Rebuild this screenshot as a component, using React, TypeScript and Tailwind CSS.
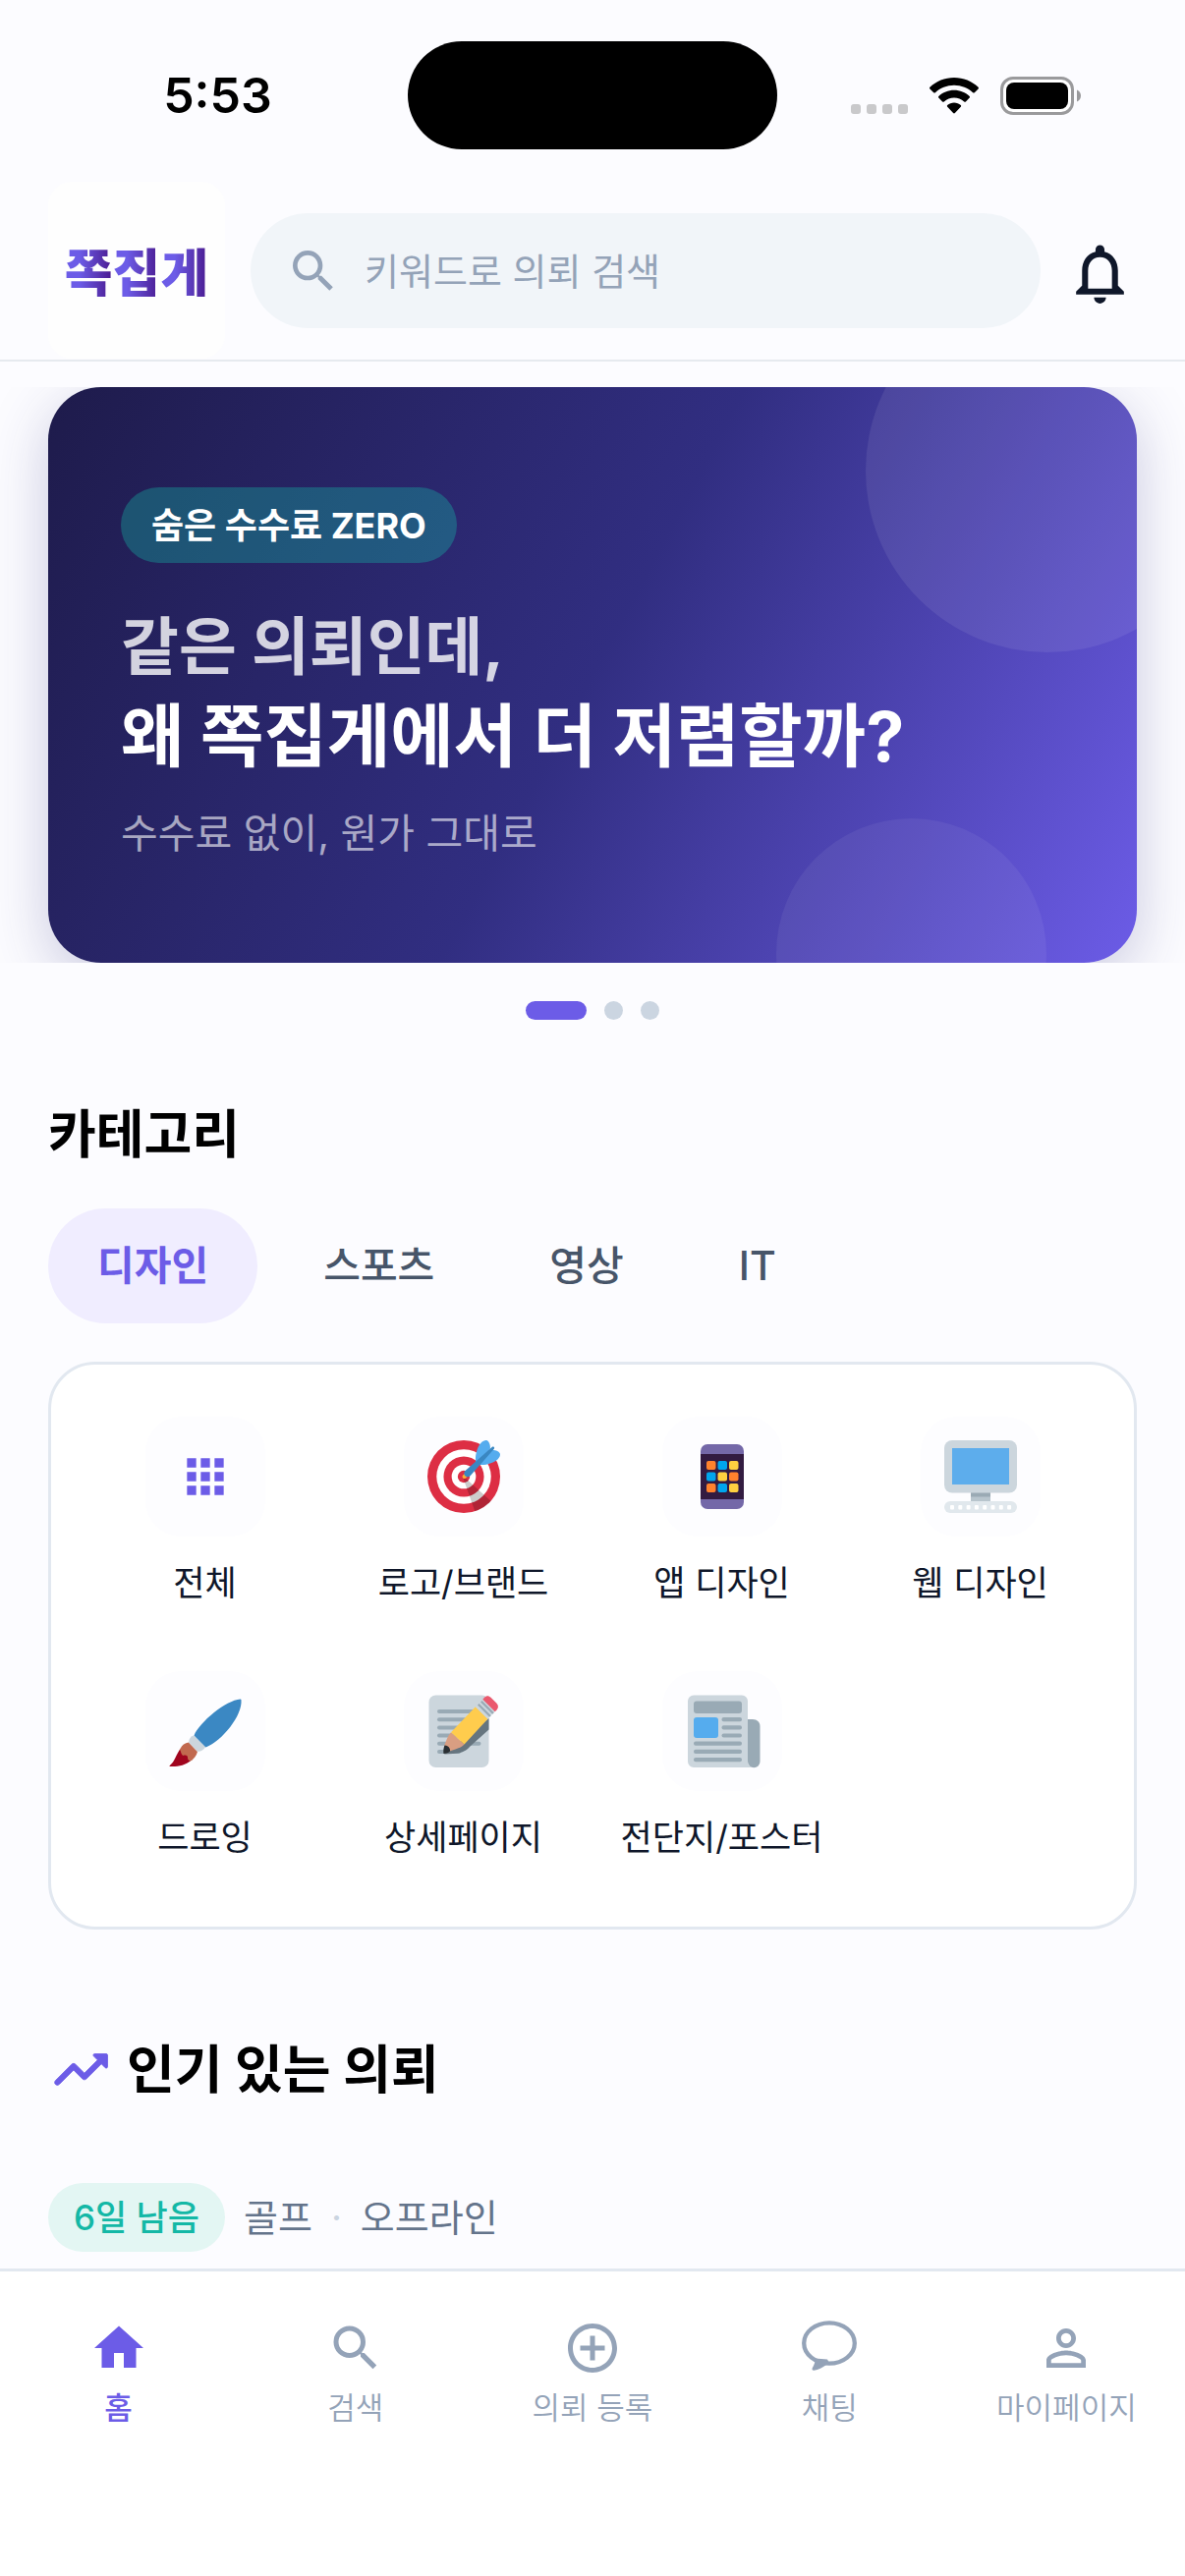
import React from "react";
import {
  MdSearch,
  MdApps,
  MdHome,
  MdAddCircleOutline,
  MdPersonOutline,
  MdOutlineNotifications,
} from "react-icons/md";

function WifiIcon() {
  return (
    <svg viewBox="0 0 50 37" className="h-[37px] w-[50px]" aria-hidden="true">
      <path d="M25 0C15.500 0 6.800 3.700 .4 9.700a1.200 1.200 0 0 0 0 1.700l3.800 3.800c.5.500 1.200.500 1.700 0C10.900 10.500 17.600 7.700 25 7.700s14.100 2.800 19.100 7.500c.5.500 1.200.500 1.700 0l3.800-3.800c.5-.5.500-1.200 0-1.700C43.200 3.700 34.500 0 25 0z" />
      <path d="M25 12.800c-6 0-11.500 2.300-15.700 6.100-.5.500-.5 1.200 0 1.700l3.800 3.800c.5.500 1.200.500 1.700 0a15 15 0 0 1 20.400 0c.5.500 1.200.500 1.700 0l3.800-3.800c.5-.5.500-1.200 0-1.700C36.500 15.100 31 12.800 25 12.800z" />
      <path d="M25 25.500c-2.600 0-4.900.9-6.800 2.500-.5.500-.5 1.200 0 1.700l5.900 6.300c.5.500 1.300.500 1.800 0l5.900-6.300c.5-.5.500-1.200 0-1.700-1.900-1.600-4.200-2.500-6.800-2.500z" />
    </svg>
  );
}

function BatteryIcon() {
  return (
    <svg viewBox="0 0 82 39" className="h-[39px] w-[82px]" aria-hidden="true">
      <rect x="1.500" y="1.500" width="72" height="36" rx="11.500" fill="#fff" stroke="#9a9a9c" strokeWidth="3" />
      <rect x="6" y="6" width="63" height="27" rx="8" />
      <path d="M78 13.500c2.400 1 4 3.300 4 6s-1.600 5-4 6z" fill="#9a9a9c" />
    </svg>
  );
}

const emoji = "h-[74px] w-[74px] overflow-visible";

function TargetIcon() {
  return (
    <svg viewBox="0 0 36 36" className={emoji} aria-hidden="true">
      <circle fill="#DD2E44" cx="18" cy="18" r="18" />
      <circle fill="#FFF" cx="18" cy="18" r="13.500" />
      <circle fill="#DD2E44" cx="18" cy="18" r="10" />
      <circle fill="#FFF" cx="18" cy="18" r="6" />
      <circle fill="#DD2E44" cx="18" cy="18" r="3" />
      <path opacity=".2" d="M18.240 18.282l13.144 11.754s-2.647 3.376-7.890 5.109L17.579 18.420l.661-.138z" />
      <path fill="#FFAC33" d="M18.294 19c-.255 0-.509-.097-.704-.292-.389-.389-.389-1.018 0-1.407l.563-.563c.389-.389 1.018-.389 1.408 0 .388.389.388 1.018 0 1.407l-.564.563c-.194.195-.448.292-.703.292z" />
      <path fill="#55ACEE" d="M24.016 6.981c-.403 2.079 0 4.691 0 4.691l7.054-7.388c.291-1.454-.528-3.932-1.718-4.238-1.190-.306-4.079.803-5.336 6.935zm5.003 5.003c-2.079.403-4.691 0-4.691 0l7.388-7.054c1.454-.291 3.932.528 4.238 1.718.306 1.190-.803 4.079-6.935 5.336z" />
      <path fill="#3A87C2" d="M32.798 4.485L21.176 17.587c-.362.362-1.673.882-2.510.046-.836-.836-.419-2.080-.057-2.443L31.815 3.501s.676-.635 1.159-.152-.176 1.136-.176 1.136z" />
    </svg>
  );
}

const keyColors = ["#FF822D", "#00A6ED", "#FFD140", "#00A6ED", "#FFD140", "#FF822D", "#FF822D", "#00A6ED", "#FFD140"];

function PhoneIcon() {
  return (
    <svg viewBox="0 0 74 74" className={emoji} aria-hidden="true">
      <rect x="15" y="4" width="44" height="66" rx="7" fill="#7468A8" />
      <rect x="15" y="14" width="44" height="46" fill="#321B41" />
      {keyColors.map((c, i) => (
        <rect key={i} x={21 + (i % 3) * 11.500} y={21 + Math.floor(i / 3) * 11.500} width="9.500" height="9" rx="2" fill={c} />
      ))}
    </svg>
  );
}

function ComputerIcon() {
  return (
    <svg viewBox="0 0 74 74" className={emoji} aria-hidden="true">
      <rect width="74" height="53.500" rx="8" fill="#CCD6DD" />
      <rect x="8" y="8" width="58" height="37" fill="#5DADEC" />
      <rect x="27" y="53.500" width="20" height="9" fill="#B8C5CD" />
      <rect x="27" y="53.500" width="20" height="4" fill="#9AAAB4" />
      <rect y="62" width="74" height="12" rx="6" fill="#E1E8ED" />
      {[0, 1, 2, 3, 4, 5, 6, 7].map((i) => (
        <rect key={i} x={6 + i * 8.300} y="66" width="4" height="4.500" rx="1" fill="#FFF" />
      ))}
    </svg>
  );
}

function BrushIcon() {
  return (
    <svg viewBox="0 0 74 74" className={emoji} aria-hidden="true">
      <path fill="#C1694F" d="M20 48.500C15 49 11.500 53 10 58.500L12 69l9-1c4-2 7-6 8-10z" />
      <path fill="#A0041E" d="M.8 72C6 68 7.500 60 11 56c1.500 2 1 4.500 3.500 6 2.500-1 5 0 4.500 2.500 0 2 2 3 3 2.500C17 72 8 73.500 1 73c-.5 0-.6-.7-.2-1z" />
      <path fill="#CCD6DD" d="M25 41.500c-3.500 1.200-5 4-4.800 7.300l8.800 9c3.500.2 6.500-1.500 8.300-5z" />
      <path fill="#3B88C3" d="M72.500 4.500C58 5.500 31 28 25.500 41.500l12 12C54 47 75 21 73.500 5.200c0-.5-.5-.8-1-.7z" />
    </svg>
  );
}

function MemoIcon() {
  return (
    <svg viewBox="0 0 74 74" className={emoji} aria-hidden="true">
      <rect x="1.500" y=".5" width="61" height="73.500" rx="7" fill="#CCD6DD" />
      {[15, 23.200, 31.400, 39.600, 47.800, 56].map((y) => (
        <rect key={y} x="10" y={y} width={y > 50 ? 24 : 44.500} height="4" rx="2" fill="#99AAB5" />
      ))}
      <path fill="#66757F" d="M62.500 24v11.500L44 52c-5 6-10 7.500-18 8l-9 .5z" />
      <path fill="#D99E82" d="M24 38.300c-3.500 3.500-5 9-7 14l5.500 5.200c5-2 11.500-3 15-7z" />
      <path fill="#292F33" d="M17.500 51.500c-1.200 3-1.500 6-1 8.500 3-.3 5-1 6.500-2.500.5-3-2-6-5.500-6z" />
      <path fill="#FFCC4D" d="M48.900 12.300L61.500 24.500 37.500 50.500 24 38.300z" />
      <path fill="#CCD6DD" d="M48.900 12.600l8-8.300 12.300 12.300-7.900 8z" />
      <path stroke="#99AAB5" strokeWidth="2.200" d="M51.800 9.800l12.200 12.200M54.800 6.800l12.200 12.200" />
      <path fill="#EA596E" d="M56.300 4.800l1.700-2c2-2.200 4.500-2 6.500 0l5.500 5.500c2.500 2.500 2.500 5 .5 7.200l-1.700 1.700z" />
    </svg>
  );
}

function NewsIcon() {
  return (
    <svg viewBox="0 0 74 74" className={emoji} aria-hidden="true">
      <path fill="#CCD6DD" d="M8 .5h49a6 6 0 0 1 6 6V68c0 3 1.500 5 4 6H8a6 6 0 0 1-6-6V6.500a6 6 0 0 1 6-6z" />
      <path fill="#99AAB5" d="M63 25h5c4.500 0 7.500 3 7.500 7v36a6 6 0 0 1-12.500 0z" />
      <rect x="8" y="6.500" width="49" height="12.500" rx="3" fill="#99AAB5" />
      <rect x="8" y="23" width="25" height="21" rx="3" fill="#55ACEE" />
      {[23, 31.200, 39.400].map((y) => (
        <rect key={y} x="36.500" y={y} width="20.500" height="4.200" rx="2" fill="#99AAB5" />
      ))}
      {[47.600, 55.800, 64].map((y) => (
        <rect key={y} x="8" y={y} width="49" height="4.200" rx="2" fill="#99AAB5" />
      ))}
    </svg>
  );
}

function ChatIcon() {
  return (
    <svg viewBox="0 0 56 56" className="size-14" aria-hidden="true">
      <ellipse cx="28" cy="23" rx="25.800" ry="20.700" fill="none" stroke="currentColor" strokeWidth="4.300" />
      <path d="M13.500 38.500c.3 3.500-.8 6.500-2.700 9.700-.7 1.400-.2 2.700 1.700 2.500 4.500-.6 8.500-2.700 12.500-5.700l3-2-2-3.500z" fill="currentColor" />
    </svg>
  );
}

function TrendIcon() {
  return (
    <svg viewBox="0 0 24 24" className="size-[66px] text-[#6c5ce7]" fill="currentColor" stroke="currentColor" strokeWidth=".3" aria-hidden="true">
      <path d="M16.850 6.850l1.440 1.440-4.880 4.880-3.290-3.290c-.39-.39-1.020-.39-1.410 0l-6 6.010c-.39.39-.39 1.020 0 1.410.39.39 1.020.39 1.410 0L9.410 12l3.290 3.290c.39.39 1.020.39 1.410 0l5.590-5.580 1.440 1.440c.31.31.85.09.85-.35V6.500c.01-.28-.21-.5-.49-.5h-4.290c-.45 0-.67.54-.36.85z" />
    </svg>
  );
}

const categories = [
  { label: "전체", icon: <MdApps className="size-14 text-[#6c5ce7]" /> },
  { label: "로고/브랜드", icon: <TargetIcon /> },
  { label: "앱 디자인", icon: <PhoneIcon /> },
  { label: "웹 디자인", icon: <ComputerIcon /> },
  { label: "드로잉", icon: <BrushIcon /> },
  { label: "상세페이지", icon: <MemoIcon /> },
  { label: "전단지/포스터", icon: <NewsIcon /> },
];

const navItems = [
  { label: "홈", icon: <MdHome className="size-[60px]" />, active: true },
  { label: "검색", icon: <MdSearch className="size-[60px]" /> },
  { label: "의뢰 등록", icon: <MdAddCircleOutline className="size-[60px]" /> },
  { label: "채팅", icon: <ChatIcon /> },
  { label: "마이페이지", icon: <MdPersonOutline className="size-[60px]" /> },
];

function StatusBar() {
  return (
    <div className="grid h-[185px] grid-cols-[1fr_376px_1fr] pt-[42px]">
      <div className="flex h-[110px] items-center justify-center pl-7 text-[50px] font-semibold leading-none">5:53</div>
      <div className="h-[110px] rounded-full bg-black" />
      <div className="flex h-[110px] items-center justify-end gap-[22px] pr-[106px]">
        <div className="flex gap-1.5 pt-7">
          <span className="size-2.5 rounded-[3px] bg-[#c9c9cb]" />
          <span className="size-2.5 rounded-[3px] bg-[#c9c9cb]" />
          <span className="size-2.5 rounded-[3px] bg-[#c9c9cb]" />
          <span className="size-2.5 rounded-[3px] bg-[#c9c9cb]" />
        </div>
        <WifiIcon />
        <BatteryIcon />
      </div>
    </div>
  );
}

function Header() {
  return (
    <header className="flex h-[183px] items-start border-b-2 border-[#e6eaef] pl-[49px] pr-[50px]">
      <a
        href="#home"
        className="flex size-[180px] shrink-0 items-center justify-center rounded-3xl bg-[#fefefe] font-['Noto_Sans_CJK_KR',sans-serif] text-[53px] font-black leading-none"
      >
        {["쪽", "집", "게"].map((c) => (
          <span key={c} className="bg-linear-to-r from-[#6c5ce7] from-30% to-[#4c1d95] to-95% bg-clip-text text-transparent">
            {c}
          </span>
        ))}
      </a>
      <label className="ml-[26px] mt-8 flex h-[117px] flex-1 items-center rounded-full bg-[#f1f5f9] pl-9">
        <MdSearch className="size-14 shrink-0 text-[#94a3b8]" />
        <input
          type="search"
          aria-label="검색"
          placeholder="키워드로 의뢰 검색"
          className="ml-6 w-full min-w-0 bg-transparent text-[38px] leading-[56px] outline-none placeholder:text-[#94a3b8]"
        />
      </label>
      <button aria-label="알림" className="ml-6 mt-[57px] text-[#0f172a]">
        <MdOutlineNotifications className="size-[73px]" />
      </button>
    </header>
  );
}

function Banner() {
  return (
    <section className="mt-[26px]">
      <div className="overflow-hidden px-[49px]">
        <div className="relative flex h-[586px] flex-col items-start overflow-hidden rounded-[54px] bg-[linear-gradient(118deg,#1e1b4b_0%,#312e81_50%,#6c5ce7_100%)] px-[74px] pt-[102px] text-white shadow-[0_16px_60px_rgba(49,46,129,0.25)]">
          <div className="absolute -right-[94px] -top-[100px] size-[370px] rounded-full bg-white/8" />
          <div className="absolute -bottom-[128px] right-[92px] size-[275px] rounded-full bg-white/6" />
          <span className="flex h-[77px] items-center rounded-full bg-[#14b8a6]/35 px-[31px] text-[36px] font-bold">숨은 수수료 ZERO</span>
          <p className="mt-[39px] text-[64px] font-bold leading-[92px] text-white/80">같은 의뢰인데,</p>
          <h1 className="text-[70px] font-bold leading-[92px]">왜 쪽집게에서 더 저렴할까?</h1>
          <p className="mt-[22px] text-[41px] leading-[60px] text-white/60">수수료 없이, 원가 그대로</p>
        </div>
      </div>
      <div className="mt-[39px] flex justify-center gap-[18px]">
        <button aria-label="1" className="h-[19px] w-[62px] rounded-full bg-[#6c5ce7]" />
        <button aria-label="2" className="size-[19px] rounded-full bg-[#cbd5e1]" />
        <button aria-label="3" className="size-[19px] rounded-full bg-[#cbd5e1]" />
      </div>
    </section>
  );
}

function Categories() {
  return (
    <section className="mt-20 px-[49px]">
      <h2 className="text-[53px] font-bold leading-[74px]">카테고리</h2>
      <div className="mt-[38px] flex gap-[17px] text-[41px] font-medium text-[#475569]">
        <button className="h-[117px] rounded-full bg-[#f0edff] px-[50px] font-bold text-[#6c5ce7]">디자인</button>
        <button className="h-[117px] rounded-full px-[50px]">스포츠</button>
        <button className="h-[117px] rounded-full px-[50px]">영상</button>
        <button className="h-[117px] rounded-full px-[50px]">IT</button>
      </div>
      <div className="mt-[39px] grid grid-cols-4 gap-y-16 rounded-[48px] border-[3px] border-[#e2e8f0] bg-white px-[25px] pb-[65px] pt-[53px]">
        {categories.map((c) => (
          <button key={c.label} className="flex flex-col items-center whitespace-nowrap text-[35px] leading-[52px] text-[#0f172a]">
            <span className="mb-[21px] flex size-[122px] items-center justify-center rounded-[36px] bg-[#fdfdff]">{c.icon}</span>
            {c.label}
          </button>
        ))}
      </div>
    </section>
  );
}

function Popular() {
  return (
    <section className="mt-[106px] px-[49px]">
      <h2 className="flex items-center gap-3.5 text-[53px] font-bold leading-[74px]">
        <TrendIcon />
        인기 있는 의뢰
      </h2>
      <div className="mt-[78px] flex items-center gap-[19px] text-[38px] text-[#64748b]">
        <span className="flex h-[70px] items-center rounded-full bg-[#e3f6f3] px-[26px] text-[35px] font-medium text-[#14b8a6]">6일 남음</span>
        골프
        <span className="text-[#cbd5e1]">·</span>
        오프라인
      </div>
    </section>
  );
}

function BottomNav() {
  return (
    <nav className="grid h-[313px] shrink-0 grid-cols-5 border-t-[3px] border-[#e2e8f0] bg-white pt-12">
      {navItems.map((n) => (
        <a
          key={n.label}
          href={"#" + n.label}
          className={
            "flex flex-col items-center whitespace-nowrap text-[31px] leading-[46px] " +
            (n.active ? "font-medium text-[#6c5ce7]" : "font-[350] text-[#94a3b8]")
          }
        >
          <span className="mb-2 flex h-[60px] items-center">{n.icon}</span>
          {n.label}
        </a>
      ))}
    </nav>
  );
}

export default function App() {
  return (
    <div className="flex h-screen flex-col bg-[#fcfcff] font-['Inter','Noto_Sans_CJK_KR',sans-serif] text-black">
      <StatusBar />
      <Header />
      <main className="min-h-0 flex-1 overflow-hidden">
        <Banner />
        <Categories />
        <Popular />
      </main>
      <BottomNav />
    </div>
  );
}
